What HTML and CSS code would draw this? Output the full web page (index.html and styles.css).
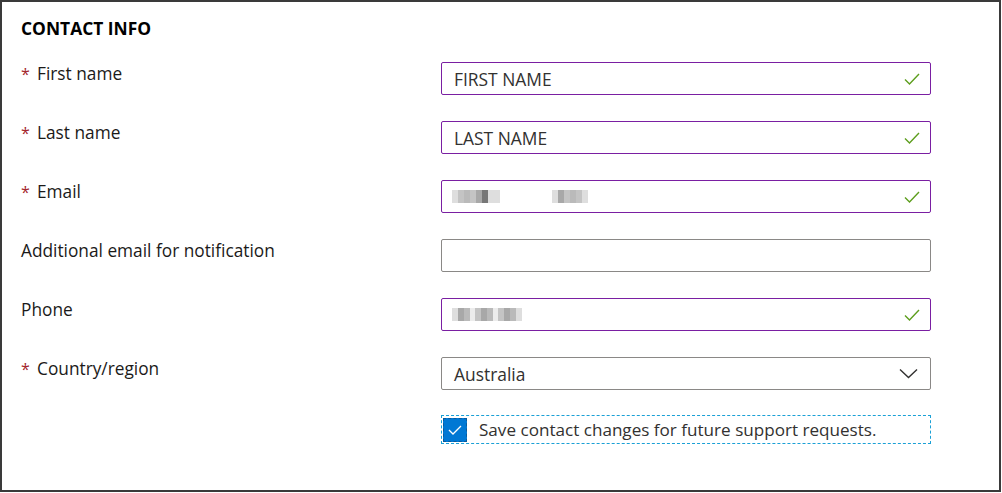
FILE: index.html
```html
<!DOCTYPE html>
<html>
<head>
<meta charset="utf-8">
<link rel="stylesheet" href="styles.css">
</head>
<body>
<div class="frame">
  <h2 class="title">CONTACT INFO</h2>
  <div class="form">
    <div class="label"><span class="req">*</span>First name</div>
    <div class="field valid"><span class="val">FIRST NAME</span>
      <svg class="ok" width="16" height="12" viewBox="0 0 16 12"><path d="M1 6.5 L5.5 11 L15 1" fill="none" stroke="#5d9e1d" stroke-width="1.4"/></svg></div>

    <div class="label"><span class="req">*</span>Last name</div>
    <div class="field valid"><span class="val">LAST NAME</span>
      <svg class="ok" width="16" height="12" viewBox="0 0 16 12"><path d="M1 6.5 L5.5 11 L15 1" fill="none" stroke="#5d9e1d" stroke-width="1.4"/></svg></div>

    <div class="label"><span class="req">*</span>Email</div>
    <div class="field valid"><span class="blur">
      <i class="px e"></i><i class="px a"></i><i class="px c"></i><i class="px a"></i><i class="px b"></i><i class="px d"></i><i class="px e"></i><i class="px e"></i><i class="gapx"></i><i class="px e"></i><i class="px b"></i><i class="px a"></i><i class="px c"></i><i class="px a"></i><i class="px e"></i></span>
      <svg class="ok" width="16" height="12" viewBox="0 0 16 12"><path d="M1 6.5 L5.5 11 L15 1" fill="none" stroke="#5d9e1d" stroke-width="1.4"/></svg></div>

    <div class="label">Additional email for notification</div>
    <div class="field"></div>

    <div class="label">Phone</div>
    <div class="field valid"><span class="blur">
      <i class="px e"></i><i class="px b"></i><i class="px c"></i><i class="px sp"></i><i class="px a"></i><i class="px b"></i><i class="px c"></i><i class="px sp"></i><i class="px a"></i><i class="px b"></i><i class="px c"></i><i class="px e"></i></span>
      <svg class="ok" width="16" height="12" viewBox="0 0 16 12"><path d="M1 6.5 L5.5 11 L15 1" fill="none" stroke="#5d9e1d" stroke-width="1.4"/></svg></div>

    <div class="label"><span class="req">*</span>Country/region</div>
    <div class="field select"><span class="val">Australia</span>
      <svg class="chev" width="19" height="11" viewBox="0 0 19 11"><path d="M1 1.5 L9.5 9.5 L18 1.5" fill="none" stroke="#323130" stroke-width="1.4"/></svg></div>

    <div class="label"></div>
    <div class="check-row">
      <span class="box"><svg width="16" height="12" viewBox="0 0 16 12"><path d="M2 6 L6 10 L14 2" fill="none" stroke="#fff" stroke-width="1.3"/></svg></span>
      <span class="check-text">Save contact changes for future support requests.</span>
    </div>
  </div>
</div>
</body>
</html>
```

FILE: styles.css
```css
* { box-sizing: border-box; }
html, body { margin: 0; padding: 0; background: #fff; }
body {
  font-family: "Open Sans", "Noto Sans", sans-serif;
  color: #1b1a19;
  width: 1002px;
  height: 493px;
}
.frame {
  width: 1001px;
  height: 492px;
  border: 2px solid #3a3a3a;
  padding: 15px 0 0 19px;
}
.title {
  margin: 0;
  font-size: 17.4px;
  line-height: 22px;
  font-weight: 700;
  color: #000;
}
.form {
  margin-top: 23px;
  display: grid;
  grid-template-columns: 420px 490px;
  grid-auto-rows: 33px;
  row-gap: 26px;
}
.label {
  font-size: 17.3px;
  line-height: 22px;
  padding-top: 1px;
  color: #1b1a19;
  display: flex;
}
.req {
  color: #a4262c;
  width: 16px;
  font-size: 16px;
}
.field {
  border: 1px solid #8a8886;
  border-radius: 2px;
  height: 33px;
  display: flex;
  align-items: center;
  padding: 0 10px 0 12px;
  font-size: 17.4px;
  color: #323130;
}
.field.valid { border-color: #7a1fa2; }
.val { flex: 1; }
.ok { margin-left: auto; }
.chev { margin-left: auto; margin-right: 2px; }
.blur {
  display: flex;
  align-items: center;
  height: 16px;
  margin-left: -2px;
  filter: blur(0.7px);
}
.px { display: inline-block; width: 6px; height: 13px; }
.px.a { background: #c4c4c4; }
.px.b { background: #a8a8a8; }
.px.c { background: #bababa; }
.px.d { background: #777; }
.px.e { background: #dedede; }
.px.sp { background: #ececec; width: 5px; }
.gapx { display: inline-block; width: 52px; }
.check-row {
  margin-top: -1px;
  height: 29px;
  border: 1px dashed #1aa0d6;
  display: flex;
  align-items: center;
  padding-left: 1px;
}
.box {
  width: 24px;
  height: 24px;
  background: #0078d4;
  border: 1px dashed #0b5a99;
  display: flex;
  align-items: center;
  justify-content: center;
}
.check-text {
  margin-left: 12px;
  font-size: 17.1px;
  color: #323130;
}
```
